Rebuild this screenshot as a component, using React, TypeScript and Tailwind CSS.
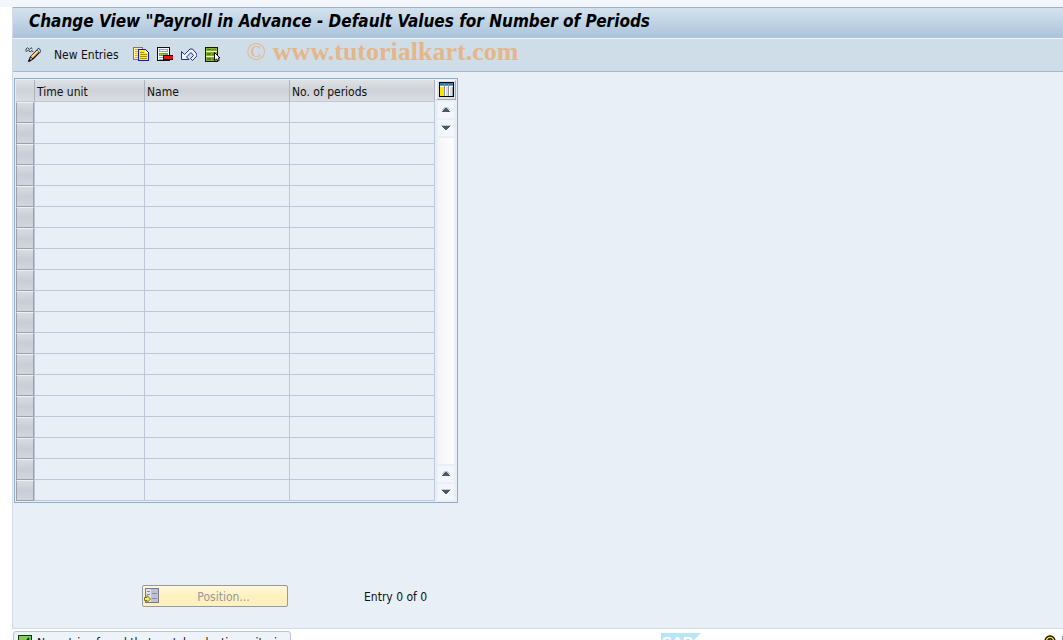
import type { ReactNode } from "react";

function Icon({ children }: { children: ReactNode }) {
  return (
    <svg width="16" height="16" viewBox="0 0 16 16" aria-hidden="true" className="block shrink-0">
      {children}
    </svg>
  );
}

const ChangeIcon = () => (
  <Icon>
    <path d="M1 4.500V2L2.500 .7L4.500 2.500M4.500 2.500L6 .7L7.500 2M1.500 4.500L3.500 3L5 5L7 3.500L8 5" fill="none" stroke="#39444d" strokeWidth="1" />
    <path d="M13.500 1.500L16 4L8 12L4 14L5.500 10Z" fill="#f8a43a" stroke="#111" strokeWidth="1.200" />
    <path d="M12.500 4L6.500 10" stroke="#ffe7ba" strokeWidth="1.500" />
    <path d="M13.500 1.500L16 4L14.500 5.500L12 3Z" fill="#b9d5f4" stroke="#3c5f9c" strokeWidth=".8" />
    <path d="M5.500 10L8 12L4 14Z" fill="#fff3dc" stroke="#111" strokeWidth=".9" />
    <path d="M3.500 12.500H5.500V14.500H3.500Z" fill="#111" />
  </Icon>
);

const CopyIcon = () => (
  <Icon>
    <g shapeRendering="crispEdges">
      <path d="M0 0h10v13H0z" fill="#7b7b68" />
      <path d="M1 1h8v11H1z" fill="#fff3a0" />
      <path d="M2 2h3v1H2zM2 4h3v1H2zM2 6h3v1H2zM2 8h3v1H2zM2 10h3v1H2z" fill="#d6b71a" />
      <path d="M5 2h8v1h1v1h1v1h1v9H5z" fill="#1414d2" />
      <path d="M6 3h6v3h3v7H6z" fill="#ffed2e" />
      <path d="M12 3h1v1h1v1h1v1h-3z" fill="#fff" />
      <path d="M7 5h4v1H7zM7 7h7v1H7zM7 9h7v1H7zM7 11h7v1H7z" fill="#a28c1d" />
    </g>
  </Icon>
);

const DeleteIcon = () => (
  <Icon>
    <g shapeRendering="crispEdges">
      <path d="M0 0h13v14H0z" fill="#101010" />
      <path d="M1 1h11v12H1z" fill="#f8faff" />
      <path d="M2 2h9v3H2z" fill="#9ba3c8" />
      <path d="M3 3h7v1H3zM3 11h4v1H3z" fill="#f4f6ff" />
      <path d="M2 6h9v3H2z" fill="#78a71e" />
      <path d="M3 7h1v1H3zM5 7h1v1H5zM7 7h1v1H7z" fill="#b2d867" />
      <path d="M2 10h4v1H2zM2 12h8v1H2z" fill="#9ba3c8" />
      <path d="M6 8h10v5H6z" fill="#241010" />
      <path d="M7 9h9v3H7z" fill="#f50a0a" />
    </g>
  </Icon>
);

const UndoIcon = () => (
  <Icon>
    <path
      d="M.5 4.500V12.500H8L5.500 10L10 5.500L12.500 8.500L9.500 11.500L11.500 13.500L15.800 9V7L11.500 2H9L3.500 7.500Z"
      fill="#edf4fc"
      stroke="#232b8c"
      strokeWidth="1"
    />
  </Icon>
);

const SelectAllIcon = () => (
  <Icon>
    <g shapeRendering="crispEdges">
      <path d="M0 0h13v15H0z" fill="#111806" />
      <path d="M1 1h11v13H1z" fill="#edf5cf" />
      <path d="M1 1h11v3H1zM1 5h11v4H1zM1 10h11v4H1z" fill="#86b329" />
      <path d="M2 2h4v1H2zM2 6h4v2H2zM2 11h4v2H2z" fill="#577f0d" />
      <path d="M7 2h4v1H7zM7 6h4v2H7zM7 11h4v2H7z" fill="#648d13" />
    </g>
    <path d="M9.500 5.500L15 11H13.200L14.200 13.500L12.700 14L11.700 12L9.500 13.500Z" fill="#fff" stroke="#111" strokeWidth="1" />
  </Icon>
);

const ColumnsIcon = () => (
  <Icon>
    <g shapeRendering="crispEdges">
      <path d="M0 0h15v15H0z" fill="#000" />
      <path d="M1 1h13v13H1z" fill="#fff" />
      <path d="M1 1h13v2H1z" fill="#287cbd" />
      <path d="M1 3h13v1H1z" fill="#5a9bd0" />
      <path d="M1 5h4v9H1z" fill="#ffe600" />
      <path d="M5 2h1v12H5zM9 2h1v12H9z" fill="#8c8f9c" />
      <path d="M7 5h2v9H7zM11 5h3v9h-3z" fill="#d9dde4" />
      <path d="M13 5h1v9h-1z" fill="#9da2ad" />
    </g>
  </Icon>
);

const PositionIcon = () => (
  <Icon>
    <g shapeRendering="crispEdges">
      <path d="M1 0h14v15H1z" fill="#77798b" />
      <path d="M2 1h12v13H2z" fill="#dfe3ec" />
      <path d="M7 1h7v13H7z" fill="#bcc1d6" />
      <path d="M8 5h5v1H8zM8 10h5v1H8zM3 3h3v1H3zM3 6h3v1H3z" fill="#8a8d9e" />
    </g>
    <path d="M.5 9.500H3V7.500L6.500 11L3 14.500V12.500H.5Z" fill="#ffe94d" stroke="#77732e" />
  </Icon>
);

function Arrow({ down = false, label }: { down?: boolean; label: string }) {
  return (
    <button type="button" aria-label={label} className="flex h-4 w-4 items-center justify-center bg-[#f3f7fb]">
      <svg width="10" height="6" viewBox="0 0 10 6" shapeRendering="crispEdges" aria-hidden="true">
        {down ? (
          <>
            <path d="M0 0h10v1H0z" fill="#c3cad0" />
            <path d="M1 1h8v1H8v1H7v1H6v1H4V4H3V3H2V2H1z" fill="#465a68" />
          </>
        ) : (
          <>
            <path d="M3 0h4v1h1v1h1v1H1V2h1V1h1z" fill="#c3cad0" />
            <path d="M4 1h2v1h1v1h1v1h1v1H1V4h1V3h1V2h1z" fill="#465a68" />
          </>
        )}
      </svg>
    </button>
  );
}

const tools = [
  { label: "Copy As", icon: <CopyIcon /> },
  { label: "Delete", icon: <DeleteIcon /> },
  { label: "Undo Change", icon: <UndoIcon /> },
  { label: "Select All", icon: <SelectAllIcon /> },
];

const rows = Array.from({ length: 19 }, (_, i) => i + 1);

const headCell =
  "h-[22px] border-r border-b border-[#a9b3c1] border-b-[#c0c8d6] bg-linear-to-b from-[#dfe3e7] via-[#ced2d8] to-[#dadee3] p-0 pt-[2px] pl-[2px] text-left font-normal";
const bodyCell = "border-r border-b border-[#bcc7d8] p-0";

export default function App() {
  return (
    <div className="flex h-screen flex-col overflow-hidden bg-white pl-3 font-['DejaVu_Sans_Condensed','DejaVu_Sans',sans-serif] text-xs text-[#101010]">
      <div className="-ml-3 h-[7px] shrink-0 bg-[#f3f6fb]" />
      <main className="flex min-h-0 flex-1 flex-col border-b border-l border-[#d5dce8] bg-[#e8eff6]">
        <header className="shrink-0 border-b border-[#a6b8ca] bg-[#cfdde8]">
          <h1 className="flex h-8 items-center overflow-hidden border-t border-b border-t-[#a3aec8] border-b-[#eff5fa] bg-linear-to-b from-[#d4e2ee] to-[#aac3da] pb-1 pl-4 text-[17px] font-bold whitespace-nowrap text-black italic">
            Change View "Payroll in Advance - Default Values for Number of Periods
          </h1>
          <div className="flex h-8 items-center pl-3">
            <button type="button" aria-label="Display/Change">
              <ChangeIcon />
            </button>
            <button type="button" className="ml-[13px] whitespace-nowrap">
              New Entries
            </button>
            <div className="ml-[14px] flex gap-2">
              {tools.map((tool) => (
                <button key={tool.label} type="button" aria-label={tool.label}>
                  {tool.icon}
                </button>
              ))}
            </div>
            <span className="ml-[26px] pb-[6px] font-['Liberation_Serif',serif] text-[26px] leading-[26px] whitespace-nowrap text-[#e5b688]">
              © <b>www.tutorialkart.com</b>
            </span>
          </div>
        </header>

        <section className="mt-[6px] ml-px flex self-start border border-[#8eaccb] p-px">
          <table className="table-fixed border-separate border-spacing-0">
            <colgroup>
              <col className="w-[19px]" />
              <col className="w-[110px]" />
              <col className="w-[145px]" />
              <col className="w-[145px]" />
            </colgroup>
            <thead>
              <tr>
                <th className={headCell} aria-label="Select" />
                <th className={headCell}>Time unit</th>
                <th className={headCell}>Name</th>
                <th className={headCell}>No. of periods</th>
              </tr>
            </thead>
            <tbody>
              {rows.map((row) => (
                <tr key={row} className="h-[21px]">
                  <td className="border-r border-[#bcc7d8] p-0">
                    <button
                      type="button"
                      aria-label={`Select row ${row}`}
                      className="block h-[21px] w-[18px] border border-t-[#eef0f3] border-r-[#9aa1ad] border-b-[#9aa1ad] border-l-[#9aa1ad] bg-linear-to-b from-[#d8dce1] via-[#c9ced6] to-[#d2d6dc]"
                    />
                  </td>
                  <td className={bodyCell} />
                  <td className={bodyCell} />
                  <td className={bodyCell} />
                </tr>
              ))}
            </tbody>
          </table>
          <div className="flex flex-col items-center pl-px">
            <button
              type="button"
              aria-label="Table settings"
              className="flex h-5 w-5 items-center justify-center border border-t-[#f4f6f8] border-r-[#a4abb3] border-b-[#a4abb3] border-l-[#f4f6f8] bg-[#dce1e6] pl-px"
            >
              <ColumnsIcon />
            </button>
            <div className="mt-[2px] flex flex-1 flex-col gap-[2px] pb-px">
              <Arrow label="Scroll to top" />
              <Arrow down label="Scroll down" />
              <div className="w-4 flex-1 bg-linear-to-r from-[#f5f5f6] to-[#fdfdfe]" />
              <Arrow label="Scroll up" />
              <Arrow down label="Scroll to bottom" />
            </div>
          </div>
        </section>

        <div className="mt-[82px] ml-[129px] flex items-center">
          <button
            type="button"
            disabled
            className="flex h-[22px] w-[146px] items-center rounded-[2px] border border-[#959a9c] bg-linear-to-b from-[#fff8df] via-[#fff0bd] to-[#fff1bd] pl-px text-[#9698a0]"
          >
            <PositionIcon />
            <span className="flex-1 pt-[2px]">Position...</span>
          </button>
          <span className="ml-[76px] pt-[2px]">Entry 0 of 0</span>
        </div>
      </main>

      <footer className="mt-[2px] ml-px flex h-[9px] shrink-0 items-start">
        <div className="flex h-5 w-[278px] items-start gap-[3px] rounded-t-[3px] border border-[#b9c6da] bg-[#edf3f8] pt-[3px] pl-1">
          <Icon>
            <path d="M.5 .5h13v13H.5z" fill="#80cc58" stroke="#17321c" shapeRendering="crispEdges" />
            <path d="M3 7L6 10L11 3" fill="none" stroke="#112b12" strokeWidth="2" />
          </Icon>
          <span className="overflow-hidden leading-4 whitespace-nowrap">No entries found that match selection criteria</span>
        </div>
        <svg width="40" height="20" viewBox="0 0 40 20" className="mt-[2px] ml-[370px]" role="img" aria-label="SAP">
          <path d="M0 0H40L20 20H0Z" fill="#b9e5f7" />
          <text x="1" y="14" fontSize="15" fontWeight="700" fill="#fff" fontFamily="Liberation Sans, sans-serif">
            SAP
          </text>
        </svg>
        <div className="mt-1 ml-auto flex gap-[6px]">
          <svg width="12" height="16" viewBox="0 0 12 16" aria-hidden="true">
            <circle cx="6" cy="6" r="5" fill="#ffe800" stroke="#111" strokeWidth="1.300" />
            <path d="M4 6C4 3 8 3 8 5.500L6 8" fill="none" stroke="#111" strokeWidth="1.500" />
          </svg>
          <span className="mt-px h-4 w-px bg-[#8194a6]" />
        </div>
      </footer>
    </div>
  );
}
